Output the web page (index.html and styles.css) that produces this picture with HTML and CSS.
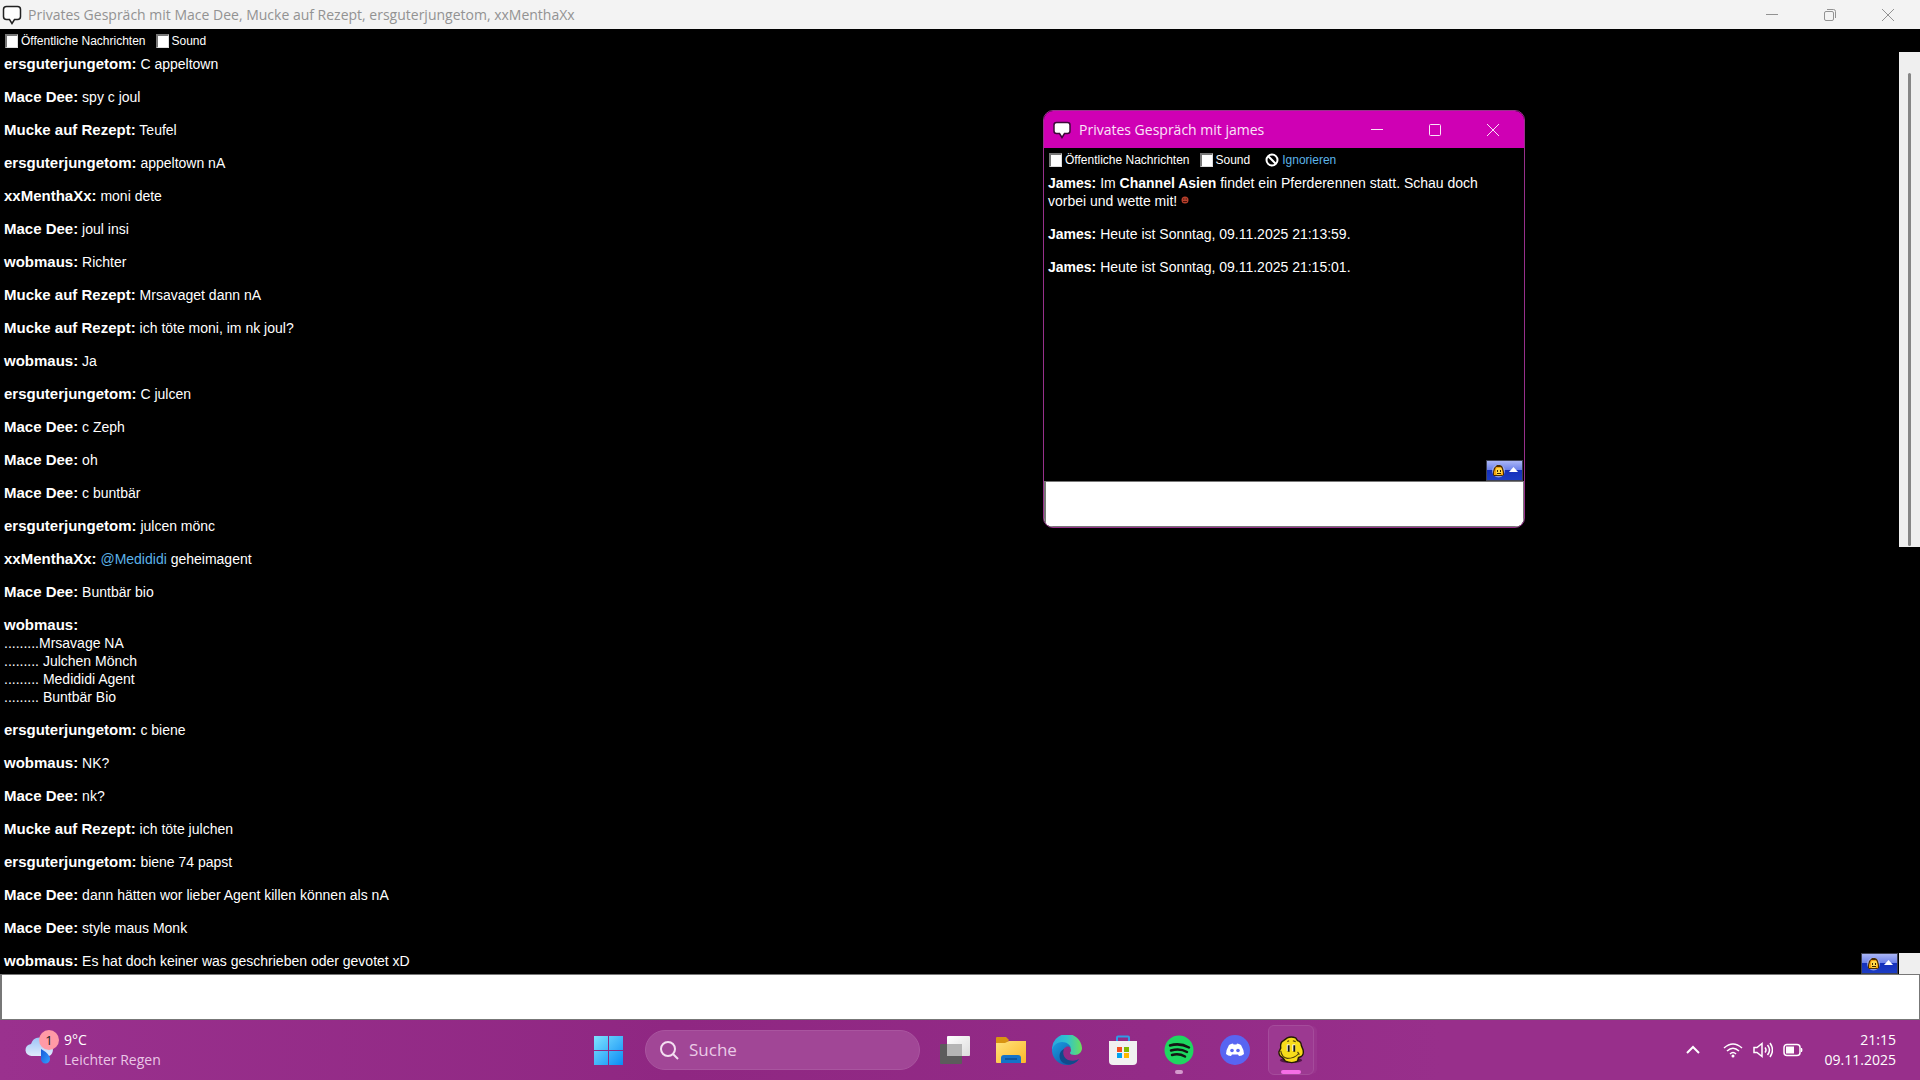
FILE: index.html
```html
<!DOCTYPE html>
<html lang="de">
<head>
<meta charset="utf-8">
<title>Privates Gespräch</title>
<link rel="stylesheet" href="styles.css">
</head>
<body>
<svg class="defs" aria-hidden="true">
  <defs>
    <linearGradient id="win" x1="0" y1="0" x2="1" y2="1"><stop offset="0" stop-color="#7fe3ff"/><stop offset="1" stop-color="#0a8cf5"/></linearGradient>
    <linearGradient id="folder" x1="0" y1="0" x2="1" y2="1"><stop offset="0" stop-color="#ffe27c"/><stop offset="1" stop-color="#fbb829"/></linearGradient>
    <linearGradient id="edgetop" x1="0" y1="0" x2="1" y2="0"><stop offset="0" stop-color="#2aa6de"/><stop offset=".5" stop-color="#2fc2cf"/><stop offset="1" stop-color="#6ce05a"/></linearGradient>
    <linearGradient id="edgelow" x1="0" y1="0" x2="1" y2="1"><stop offset="0" stop-color="#1b9de2"/><stop offset="1" stop-color="#0c4a9c"/></linearGradient>
    <linearGradient id="cloud" x1="0" y1="0" x2="0" y2="1"><stop offset="0" stop-color="#9cc5f7"/><stop offset="1" stop-color="#dfeafc"/></linearGradient>
    <linearGradient id="drop" x1="0" y1="0" x2="1" y2="1"><stop offset="0" stop-color="#1557d8"/><stop offset="1" stop-color="#35a1ff"/></linearGradient>
    <linearGradient id="view" x1="0" y1="0" x2="1" y2="1"><stop offset="0" stop-color="#fff"/><stop offset="1" stop-color="#dcdcdc"/></linearGradient>
    <symbol id="emoji" viewBox="0 0 26 14">
      <ellipse cx="6.500" cy="7" rx="6.500" ry="6.500" fill="#b4bdf0" opacity=".7"/>
      <path d="M1 11V8l1-4 2-2 1-1h3l2 1 1 2 1 4v3l-2 1H2z" fill="#4a2c00"/>
      <path d="M2 11V8l1-3 1-2h5l1 2 1 3v3z" fill="#f3a312"/>
      <path d="M4 9V5l1-1h4l1 1v4l-2 2H5z" fill="#ffd94a"/>
      <path d="M5 6h1v2H5zM8 6h1v2H8zM5 9h4v1H5z" fill="#3a2400"/>
      <path d="M17 8l4.500-5L26 8z" fill="#fff"/>
    </symbol>
  </defs>
</svg>

<div class="desktop">
  <main class="chat">
    <header class="titlebar">
      <svg class="bubble" viewBox="0 0 20 20"><path d="M4.500 1.500h11q3 0 3 3v7q0 3-3 3h-3l-2.500 4-2.500-4h-3q-3 0-3-3v-7q0-3 3-3z" fill="#fff" stroke="#222" stroke-width="1.500"/></svg>
      <h1 class="title">Privates Gespräch mit Mace Dee, Mucke auf Rezept, ersguterjungetom, xxMenthaXx</h1>
      <div class="controls">
        <button class="control" aria-label="Minimieren"><svg viewBox="0 0 14 14"><path d="M1 6.500h12"/></svg></button>
        <button class="control" aria-label="Verkleinern"><svg viewBox="0 0 14 14"><rect x="1.500" y="3.500" width="9" height="9" rx="1.500"/><path d="M4 1.500h6.500q2 0 2 2V10"/></svg></button>
        <button class="control" aria-label="Schließen"><svg viewBox="0 0 14 14"><path d="M1 1l12 12M13 1L1 13"/></svg></button>
      </div>
    </header>
    <div class="options">
      <label class="option"><input type="checkbox">Öffentliche Nachrichten</label>
      <label class="option"><input type="checkbox">Sound</label>
    </div>
    <div class="body">
      <div class="log">
        <p><b>ersguterjungetom:</b> C appeltown</p>
        <p><b>Mace Dee:</b> spy c joul</p>
        <p><b>Mucke auf Rezept:</b> Teufel</p>
        <p><b>ersguterjungetom:</b> appeltown nA</p>
        <p><b>xxMenthaXx:</b> moni dete</p>
        <p><b>Mace Dee:</b> joul insi</p>
        <p><b>wobmaus:</b> Richter</p>
        <p><b>Mucke auf Rezept:</b> Mrsavaget dann nA</p>
        <p><b>Mucke auf Rezept:</b> ich töte moni, im nk joul?</p>
        <p><b>wobmaus:</b> Ja</p>
        <p><b>ersguterjungetom:</b> C julcen</p>
        <p><b>Mace Dee:</b> c Zeph</p>
        <p><b>Mace Dee:</b> oh</p>
        <p><b>Mace Dee:</b> c buntbär</p>
        <p><b>ersguterjungetom:</b> julcen mönc</p>
        <p><b>xxMenthaXx:</b> <a href="#">@Medididi</a> geheimagent</p>
        <p><b>Mace Dee:</b> Buntbär bio</p>
        <p><b>wobmaus:</b><br>.........Mrsavage NA<br>......... Julchen Mönch<br>......... Medididi Agent<br>......... Buntbär Bio</p>
        <p><b>ersguterjungetom:</b> c biene</p>
        <p><b>wobmaus:</b> NK?</p>
        <p><b>Mace Dee:</b> nk?</p>
        <p><b>Mucke auf Rezept:</b> ich töte julchen</p>
        <p><b>ersguterjungetom:</b> biene 74 papst</p>
        <p><b>Mace Dee:</b> dann hätten wor lieber Agent killen können als nA</p>
        <p><b>Mace Dee:</b> style maus Monk</p>
        <p><b>wobmaus:</b> Es hat doch keiner was geschrieben oder gevotet xD</p>
      </div>
      <button class="smileys" aria-label="Smileys"><svg viewBox="0 0 26 14"><use href="#emoji"/></svg></button>
      <div class="scroll"><div class="track"><div class="thumb"></div></div><div class="corner"></div></div>
    </div>
    <textarea class="entry" aria-label="Nachricht"></textarea>
  </main>

  <section class="popup">
    <header class="titlebar">
      <svg class="bubble" viewBox="0 0 20 20"><path d="M4.500 2.500h11q2.500 0 2.500 2.500v6q0 2.500-2.500 2.500h-3l-2.500 4-2.500-4h-3q-2.500 0-2.500-2.500v-6q0-2.500 2.500-2.500z" fill="#fff" stroke="#3d0a38" stroke-width="1.500"/></svg>
      <h2 class="title">Privates Gespräch mit james</h2>
      <div class="controls">
        <button class="control" aria-label="Minimieren"><svg viewBox="0 0 14 14"><path d="M1 6.500h12"/></svg></button>
        <button class="control" aria-label="Maximieren"><svg viewBox="0 0 14 14"><rect x="1.500" y="1.500" width="11" height="11" rx="1"/></svg></button>
        <button class="control" aria-label="Schließen"><svg viewBox="0 0 14 14"><path d="M1 1l12 12M13 1L1 13"/></svg></button>
      </div>
    </header>
    <div class="options">
      <label class="option"><input type="checkbox">Öffentliche Nachrichten</label>
      <label class="option"><input type="checkbox">Sound</label>
      <a class="ignore" href="#"><svg viewBox="0 0 14 14"><circle cx="7" cy="7" r="5.500"/><path d="M3 3l8 8"/></svg>Ignorieren</a>
    </div>
    <div class="body">
      <div class="log">
        <p><b>James:</b> Im <b>Channel Asien</b> findet ein Pferderennen statt. Schau doch vorbei und wette mit! <svg class="dot" viewBox="0 0 8 8"><circle cx="4" cy="4" r="3.500" fill="#b8402c"/><path d="M2 2.500h1.500v1H2zM4.500 2.500H6v1H4.500zM2 5h4v1H2z" fill="#4d120a"/></svg></p>
        <p><b>James:</b> Heute ist Sonntag, 09.11.2025 21:13:59.</p>
        <p><b>James:</b> Heute ist Sonntag, 09.11.2025 21:15:01.</p>
      </div>
      <button class="smileys" aria-label="Smileys"><svg viewBox="0 0 26 14"><use href="#emoji"/></svg></button>
    </div>
    <textarea class="entry" aria-label="Nachricht an james"></textarea>
  </section>

  <footer class="taskbar">
    <button class="weather">
      <span class="weather-icon">
        <svg viewBox="0 0 30 30"><path d="M7 21a6 6 0 0 1-1-12 9 9 0 0 1 17-1 7 7 0 0 1 1 13z" fill="url(#cloud)"/><path d="M16 14q9 5 9 10a4.500 4.500 0 0 1-9 0z" fill="url(#drop)"/></svg>
        <span class="badge">1</span>
      </span>
      <span class="weather-text"><span>9°C</span><span class="faint">Leichter Regen</span></span>
    </button>
    <nav class="apps">
      <button class="app" aria-label="Start"><svg viewBox="0 0 30 30"><path d="M1 1h14v14H1zM16 1h14v14H16zM1 16h14v14H1zM16 16h14v14H16z" fill="url(#win)"/></svg></button>
      <label class="search"><svg viewBox="0 0 20 20"><circle cx="9" cy="9" r="7"/><path d="M14 14l5 5"/></svg><input type="text" placeholder="Suche" aria-label="Suche"></label>
      <button class="app" aria-label="Taskansicht"><svg viewBox="0 0 30 30"><rect x="0" y="9" width="22" height="20" rx="1" fill="#5c5c5c"/><rect x="7" y="1" width="23" height="20" rx="1" fill="url(#view)"/><path d="M7 9h15v12H7z" fill="#b5b5b5"/></svg></button>
      <button class="app" aria-label="Explorer"><svg viewBox="0 0 30 30"><path d="M0 3q0-1 1-1h9l3 3-3 4H0z" fill="#d99412"/><path d="M0 8h9l4-2h17v21q0 1-1 1H1q-1 0-1-1z" fill="url(#folder)"/><path d="M5 28v-5q0-3 3-3h14q3 0 3 3v5z" fill="#1473c8"/><path d="M9 24h12" stroke="#0b4d93" stroke-width="1.500"/></svg></button>
      <button class="app" aria-label="Edge"><svg viewBox="0 0 30 30"><path d="M0 15A15 15 0 0 1 30 13c0 4-3 7-7 7-3 0-5-1-5-2s1-1 1-3c0-3-3-6-8-6-6 0-11 4-11 8z" fill="url(#edgetop)"/><path d="M0 16c0-5 5-9 10-9 5 0 8 3 9 6-1-1-3-2-5-1-4 2-5 7-3 10 3 5 10 6 16 2-3 4-7 6-12 6A15 15 0 0 1 0 16z" fill="url(#edgelow)"/><path d="M12 14c-2 5 0 9 4 11 4 1 8 1 11-1-4 6-12 7-17 3-4-4-3-11 2-13z" fill="#114a8b"/></svg></button>
      <button class="app" aria-label="Store"><svg viewBox="0 0 30 30"><path d="M9 7V2.500q0-1 1-1h10q1 0 1 1V7" fill="none" stroke="#2e9be8" stroke-width="2"/><path d="M1 6h28v20q0 4-4 4H5q-4 0-4-4z" fill="#f1f1f1"/><path d="M9 12h5v5H9z" fill="#f25022"/><path d="M16 12h5v5h-5z" fill="#7fba00"/><path d="M9 18h5v5H9z" fill="#00a4ef"/><path d="M16 18h5v5h-5z" fill="#ffb900"/></svg></button>
      <button class="app running" aria-label="Spotify"><svg viewBox="0 0 30 30"><circle cx="15" cy="15" r="14.500" fill="#1ed760"/><path d="M6 10.500q10-3 19 2M7 15.500q9-2.500 16 1.500M8 20q7-2 13 1.500" fill="none" stroke="#141414" stroke-width="2.500" stroke-linecap="round"/></svg></button>
      <button class="app" aria-label="Discord"><svg viewBox="0 0 30 30"><circle cx="15" cy="15" r="15" fill="#5865f2"/><path d="M9 10q2-1.500 4-1.500l.5 1h3l.5-1q2 0 4 1.500 3 5 3 9-2 2-5 2l-1-1.500h-6L11 21q-3 0-5-2 0-4 3-9z" fill="#fff"/><circle cx="12" cy="15.500" r="1.800" fill="#5865f2"/><circle cx="18" cy="15.500" r="1.800" fill="#5865f2"/></svg></button>
      <button class="app active" aria-label="Chat"><span class="tile"><svg viewBox="0 0 30 30"><ellipse cx="15" cy="26" rx="12" ry="3" fill="#4f1747"/><path d="M11 2q4-2 9 0l2 3q4 1 4 5l2 5q1 5-2 7l-3 1-1 4q-6 3-13 0l-3-4q-4-1-4-6l2-4q-1-6 3-8z" fill="#f7dc1b" stroke="#221a05" stroke-width="1.500"/><path d="M12 9v7M18 9v7" stroke="#fff" stroke-width="3"/><path d="M12.500 10v7M18.500 10v7" stroke="#151515" stroke-width="2"/><path d="M4 16q1 7 7 8 8 0 12-5M22 17l2 3M11 6l2-1M17 5l3 1" fill="none" stroke="#51400b" stroke-width="1.200"/></svg></span></button>
    </nav>
    <div class="tray">
      <button class="tray-icon" aria-label="Ausgeblendete Symbole"><svg width="16" height="20" viewBox="0 0 16 20"><path d="M2 13l6-6 6 6" stroke-width="2"/></svg></button>
      <button class="tray-group" aria-label="Netzwerk, Lautstärke, Akku">
        <svg width="20" height="20" viewBox="0 0 20 20"><path d="M1 8q9-8 18 0M4 11q6-5.500 12 0M7 14q3-3 6 0" stroke-width="1.500"/><circle cx="10" cy="16" r="1.500" fill="#fff" stroke="none"/></svg>
        <svg width="20" height="20" viewBox="0 0 20 20"><path d="M1 7.500h3l5-4v13l-5-4H1zM12 7.500q2 2.500 0 5M14.500 5q4 5 0 10M17 3q5 7 0 14" stroke-width="1.500"/></svg>
        <svg width="20" height="20" viewBox="0 0 20 20"><rect x="1" y="4.500" width="16" height="11" rx="3" stroke-width="1.500"/><path d="M3 6.500h8v7H3zM18 8h1q1 2 0 4h-1z" fill="#fff" stroke="none"/></svg>
      </button>
      <button class="clock"><span>21:15</span><span>09.11.2025</span></button>
    </div>
  </footer>
</div>
</body>
</html>
```
FILE: styles.css
```css
* { box-sizing: border-box; }

body {
  margin: 0;
  background: #000;
  color: #fff;
  font-family: "Liberation Sans", Arial, sans-serif;
}

button {
  margin: 0;
  padding: 0;
  border: 0;
  background: none;
  color: inherit;
  font: inherit;
}

a { color: #5cb3e8; text-decoration: none; }

.defs { position: absolute; width: 0; height: 0; }

.desktop {
  position: relative;
  display: flex;
  flex-direction: column;
  min-height: 100vh;
}

/* Chat windows */
.chat { flex: 1; display: flex; flex-direction: column; }

.titlebar {
  display: flex;
  align-items: center;
  height: 29px;
  padding-left: 2px;
  background: #f3f3f3;
  color: #929292;
  font-family: "Open Sans", "Noto Sans", sans-serif;
}

.bubble { width: 20px; height: 20px; margin-right: 6px; }

.title { flex: 1; margin: 0; font-size: 14px; line-height: 20px; font-weight: 400; }

.controls { display: flex; }

.control { display: flex; justify-content: center; align-items: center; width: 58px; height: 28px; }
.control svg { width: 14px; height: 14px; fill: none; stroke: currentColor; }
.chat .controls { padding-right: 3px; }

.options {
  display: flex;
  align-items: center;
  gap: 10px;
  height: 23px;
  padding-left: 5px;
  font-size: 12px;
  line-height: 16px;
}

.option { display: flex; align-items: center; gap: 3px; }

.option input {
  appearance: none;
  width: 13px;
  height: 14px;
  margin: 0;
  border: 1px solid #ddd;
  border-top: 2px solid #777;
  border-left: 2px solid #777;
  background: #fff;
}

.body { position: relative; flex: 1; display: flex; }

.log { flex: 1; padding: 3px 4px; font-size: 14px; line-height: 18px; }
.log p { margin: 0 0 15px; }
.log p:last-child { margin-bottom: 0; }
.chat .log b { font-size: 15px; line-height: 16px; }

.scroll { display: flex; flex-direction: column; justify-content: space-between; width: 21px; }
.track { height: calc(54% - 3px); padding: 21px 9px 1px; background: #efefef; }
.thumb { height: 100%; border-radius: 2px; background: #868686; }
.corner { height: 21px; background: #efefef; }

.smileys {
  position: absolute;
  right: 22px;
  bottom: 0;
  display: flex;
  justify-content: center;
  align-items: center;
  width: 37px;
  height: 21px;
  border: 1px solid #3e4152;
  background: linear-gradient(#aab6f6, #6b80ea 48%, #1530bc 50%, #1c3cc4);
}
.smileys svg { width: 26px; height: 14px; }

.entry {
  display: block;
  width: 100%;
  height: 46px;
  margin: 0;
  padding: 4px;
  border: 1px solid #777;
  border-left-width: 2px;
  background: #fff;
  resize: none;
}

/* Floating window */
.popup {
  position: absolute;
  left: 1043px;
  top: 110px;
  display: flex;
  flex-direction: column;
  width: 482px;
  min-height: 418px;
  border: 1px solid #97308b;
  border-radius: 10px;
  background: #000;
  overflow: hidden;
}
.popup .titlebar { height: 37px; padding-left: 8px; background: #cf00b4; color: #fbe4f8; }
.popup .bubble { margin-right: 7px; }
.popup .control { height: 36px; width: 58px; }
.popup .controls { padding-right: 2px; }
.popup .options { height: 23px; }
.popup .log { padding-right: 24px; }
.popup .smileys { right: 1px; }

.ignore { display: flex; align-items: center; gap: 3px; margin-left: 5px; }
.ignore svg { width: 14px; height: 14px; fill: none; stroke: #fff; stroke-width: 2; }

.dot { width: 8px; height: 8px; vertical-align: 2px; }

/* Taskbar */
.taskbar {
  display: grid;
  grid-template-columns: 1fr auto 1fr;
  align-items: center;
  height: 60px;
  background: linear-gradient(90deg, #9a318e, #8f2782 35%, #932b87 60%, #982f8b 75%);
  font-family: "Open Sans", "Noto Sans", sans-serif;
  font-size: 14px;
  line-height: 20px;
}

.weather { justify-self: start; display: flex; align-items: center; gap: 9px; margin-left: 25px; text-align: left; }
.weather-icon { position: relative; display: flex; }
.weather-icon svg { width: 30px; height: 30px; }
.badge {
  position: absolute;
  right: -4px;
  top: -5px;
  width: 20px;
  height: 20px;
  border-radius: 50%;
  background: #ff9aa6;
  color: #222;
  font-size: 13px;
  text-align: center;
}
.weather-text { display: flex; flex-direction: column; }
.faint { color: #eac6e6; }

.apps { display: flex; align-items: center; margin-right: 21px; }

.app { position: relative; display: flex; justify-content: center; align-items: center; width: 56px; height: 50px; }
.app svg { width: 30px; height: 30px; }

.running::after, .active::after {
  content: "";
  position: absolute;
  bottom: 1px;
  width: 8px;
  height: 4px;
  border-radius: 2px;
  background: #d49acd;
}
.active::after { width: 20px; background: #f56ee6; }

.tile {
  display: flex;
  justify-content: center;
  align-items: center;
  width: 46px;
  height: 50px;
  border: 1px solid #a54b9b;
  border-radius: 6px;
  background: #9c3991;
  box-shadow: 4px 0 0 -1px #9a358e;
}
.tile svg { width: 28px; height: 30px; }

.search {
  display: flex;
  align-items: center;
  gap: 10px;
  width: 275px;
  height: 40px;
  margin: 0 7px 0 9px;
  padding: 0 13px;
  border: 1px solid #a9559f;
  border-radius: 20px;
  background: #a14696;
}
.search svg { width: 20px; height: 20px; fill: none; stroke: #f4dff1; stroke-width: 2; }
.search input {
  flex: 1;
  min-width: 0;
  padding: 0;
  border: 0;
  outline: 0;
  background: none;
  color: #fff;
  font: inherit;
  font-size: 17px;
}
.search input::placeholder { color: #eacbe6; opacity: 1; }

.tray { justify-self: end; display: flex; align-items: center; gap: 22px; padding-right: 24px; }
.tray svg { fill: none; stroke: #fff; }
.tray-icon, .tray-group { display: flex; gap: 10px; }
.clock { display: flex; flex-direction: column; text-align: right; }
```
